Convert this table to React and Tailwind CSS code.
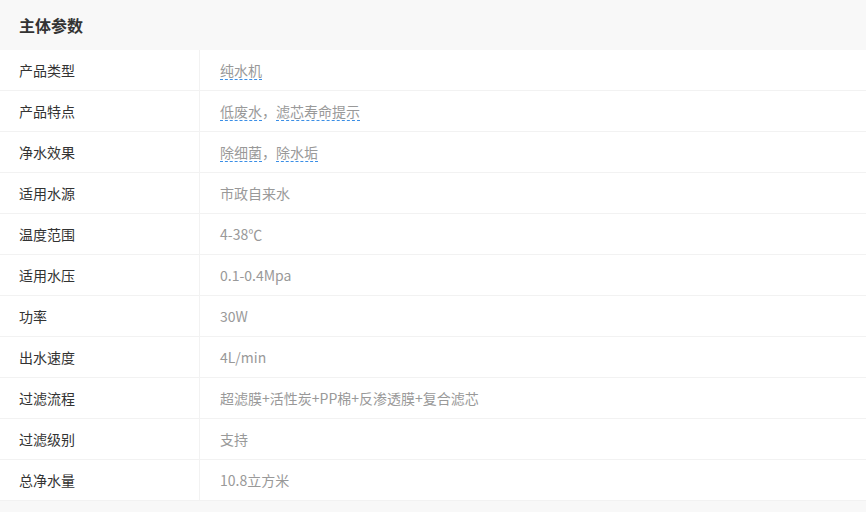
import React from "react";

const rows = [
    { label: "产品类型", links: ["纯水机"] },
    { label: "产品特点", links: ["低废水", "滤芯寿命提示"] },
    { label: "净水效果", links: ["除细菌", "除水垢"] },
    { label: "适用水源", value: "市政自来水" },
    { label: "温度范围", value: "4-38℃" },
    { label: "适用水压", value: "0.1-0.4Mpa" },
    { label: "功率", value: "30W" },
    { label: "出水速度", value: "4L/min" },
    { label: "过滤流程", value: "超滤膜+活性炭+PP棉+反渗透膜+复合滤芯" },
    { label: "过滤级别", value: "支持" },
    { label: "总净水量", value: "10.8立方米" },
];

const font = { fontFamily: '"Noto Sans CJK SC", "Open Sans", sans-serif' };

const App = () => {
    return (
        <div className="w-[866px] h-[512px] bg-[#f8f8f8] overflow-hidden" style={font}>
            <div className="h-[50px] flex items-center pl-[19px] text-[16px] font-bold text-[#333]">
                主体参数
            </div>
            <div className="bg-white">
                {rows.map((row) => (
                    <div key={row.label} className="flex h-[41px] border-b border-[#f2f2f2]">
                        <div className="w-[200px] shrink-0 flex items-center pl-[19px] text-[14px] text-[#333] border-r border-[#f2f2f2]">
                            {row.label}
                        </div>
                        <div className="flex items-center pl-[20px] text-[14px] text-[#999]">
                            {row.links ? (
                                row.links.map((l, i) => (
                                    <React.Fragment key={l}>
                                        {i > 0 && <span>，</span>}
                                        <span className="border-b border-dashed border-[#3a8ee6] leading-[18px]">{l}</span>
                                    </React.Fragment>
                                ))
                            ) : (
                                <span>{row.value}</span>
                            )}
                        </div>
                    </div>
                ))}
            </div>
        </div>
    );
};

export default App;
